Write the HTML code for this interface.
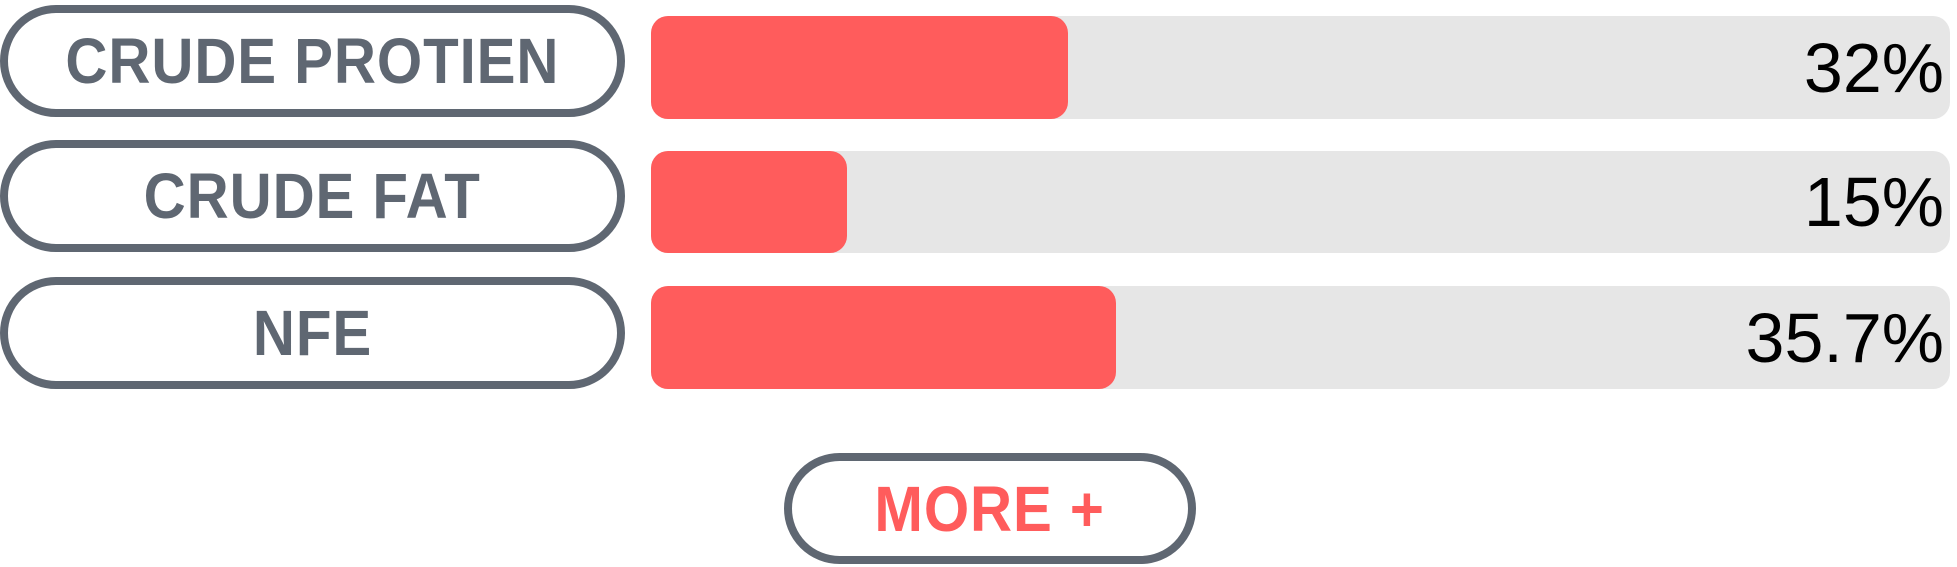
<!DOCTYPE html>
<html><head><meta charset="utf-8"><style>
body{margin:0;width:1957px;height:567px;background:#fff;position:relative;overflow:hidden;font-family:"Liberation Sans",sans-serif}
.pill{position:absolute;box-sizing:border-box;border:8px solid #5f6772;border-radius:60px;display:flex;align-items:center;justify-content:center;color:#5f6772;font-weight:bold;font-size:64px;letter-spacing:1px}
.pill span{display:inline-block;transform:scaleX(0.91)}
.bar{position:absolute;left:651px;width:1299px;background:#e6e6e6;border-radius:17px}
.fill{position:absolute;left:0;top:0;bottom:0;background:#ff5c5c;border-radius:17px}
.pct{position:absolute;right:6px;top:0;bottom:0;display:flex;align-items:center;font-size:70px;color:#000}
</style></head><body>
<div class="pill" style="left:0;top:5px;width:625px;height:112px"><span>CRUDE PROTIEN</span></div>
<div class="pill" style="left:0;top:140px;width:625px;height:112px"><span>CRUDE FAT</span></div>
<div class="pill" style="left:0;top:277px;width:625px;height:112px"><span>NFE</span></div>
<div class="bar" style="top:16px;height:103px"><div class="fill" style="width:417px"></div><div class="pct">32%</div></div>
<div class="bar" style="top:151px;height:102px"><div class="fill" style="width:196px"></div><div class="pct">15%</div></div>
<div class="bar" style="top:286px;height:103px"><div class="fill" style="width:465px"></div><div class="pct">35.7%</div></div>
<div class="pill" style="left:784px;top:453px;width:412px;height:111px;color:#ff5c5c"><span>MORE +</span></div>
</body></html>
